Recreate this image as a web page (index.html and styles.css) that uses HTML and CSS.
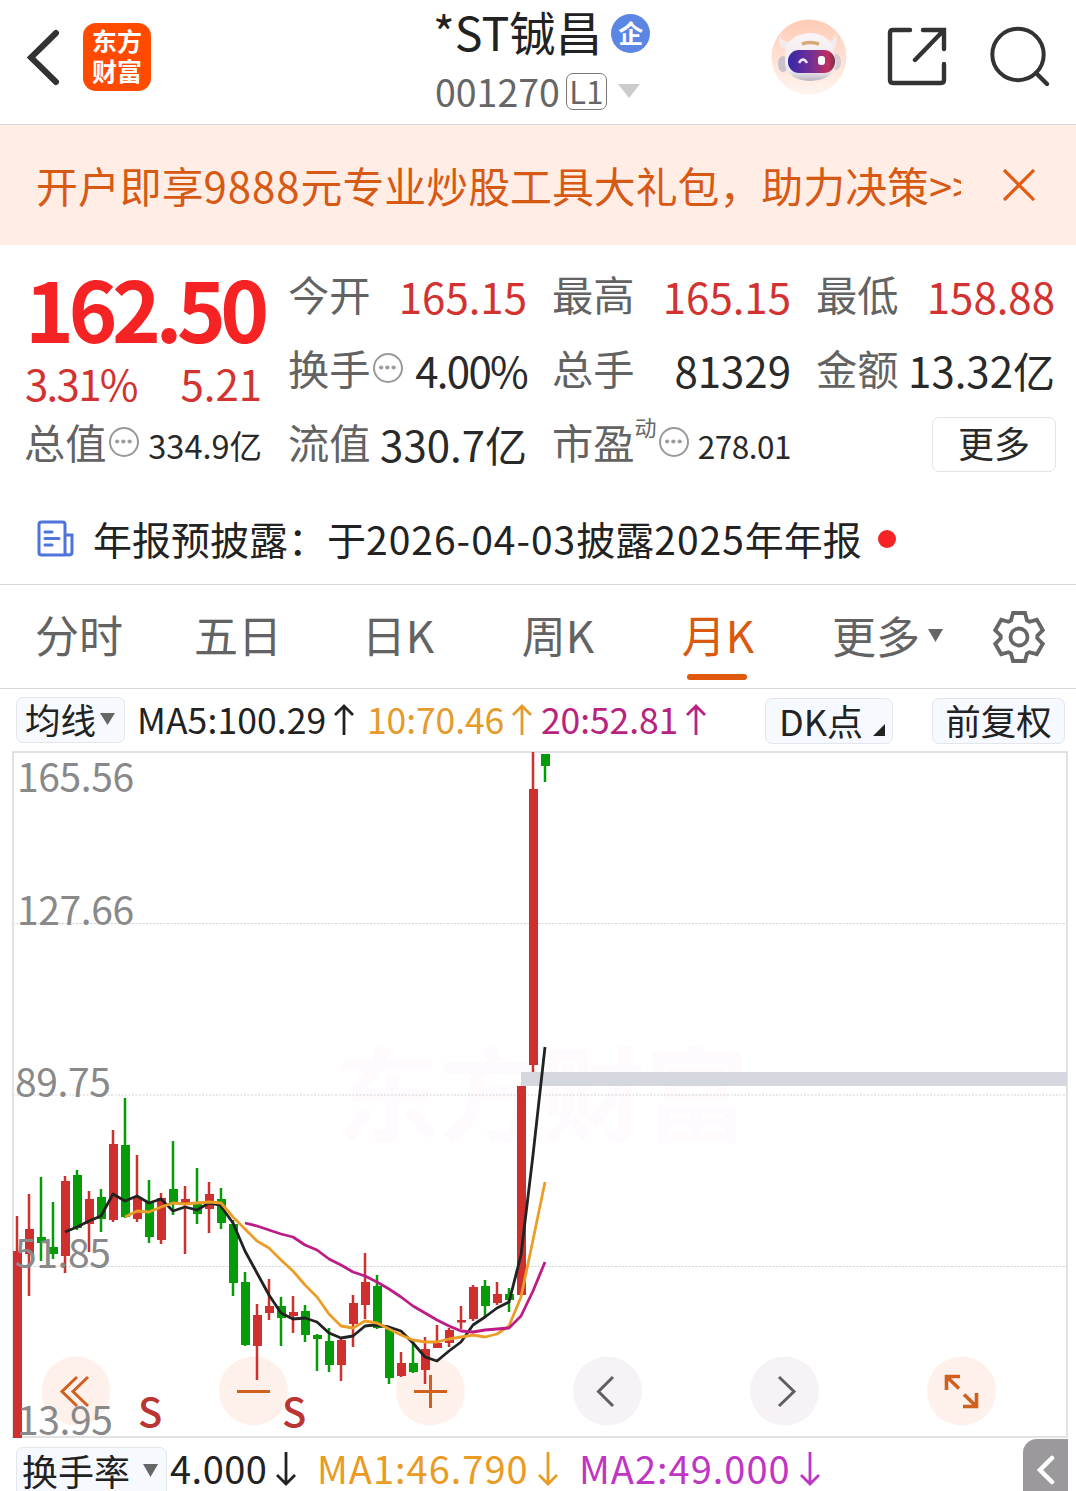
FILE: index.html
```html
<!DOCTYPE html>
<html lang="zh-CN">
<head>
<meta charset="utf-8">
<title>*ST铖昌 001270</title>
<link rel="stylesheet" href="styles.css">
</head>
<body>
<header class="header">
  <div class="header-left">
    <svg class="back" width="36" height="58" viewBox="0 0 36 58"><path d="M30 5L5 29.500L30 54" fill="none" stroke="#333" stroke-width="6" stroke-linecap="round"/></svg>
    <div class="logo"><span>东方</span><span>财富</span></div>
  </div>
  <div class="header-title">
    <div class="name"><span>*ST铖昌</span><i class="badge">企</i></div>
    <div class="code"><span>001270</span><b class="level">L1</b><svg width="22" height="14" viewBox="0 0 22 14"><path d="M0 0H22L11 14Z" fill="#ccc"/></svg></div>
  </div>
  <div class="header-right">
    <svg width="76" height="76" viewBox="0 0 76 76">
      <defs>
        <linearGradient id="halo" x2="0" y2="1"><stop offset="0" stop-color="#ffcbb5"/><stop offset="1" stop-color="#fff5f0"/></linearGradient>
        <linearGradient id="visor"><stop offset="0" stop-color="#3527a8"/><stop offset=".5" stop-color="#743096"/><stop offset=".85" stop-color="#c12f60"/><stop offset="1" stop-color="#7a3048"/></linearGradient>
        <linearGradient id="shell" x2="0" y2="1"><stop offset="0" stop-color="#faf5f6"/><stop offset=".8" stop-color="#eee8ee"/><stop offset="1" stop-color="#b8b3bf"/></linearGradient>
      </defs>
      <circle cx="38" cy="38" r="37.500" fill="url(#halo)"/>
      <path d="M17 31Q5 28 9 17Q13 25 22 22M56 22Q64 23 64 14Q69 25 61 31" fill="#f3ebee"/>
      <ellipse cx="12" cy="45" rx="5" ry="8" fill="#c9c2ca"/><ellipse cx="65" cy="43" rx="5" ry="8" fill="#d5ccd3"/>
      <path d="M14 34Q17 15 39 14Q60 15 63 34L65 46Q61 61 39 62Q18 61 14 46Z" fill="url(#shell)"/>
      <path d="M31 25Q39 22 48 25" fill="none" stroke="#d9a879" stroke-width="3.500"/>
      <rect x="17" y="31" width="47" height="23" rx="11" fill="url(#visor)"/>
      <path d="M28 44Q32 37 36 44" fill="none" stroke="#f0e8ff" stroke-width="2.500"/><rect x="47" y="37" width="7" height="9" rx="3" fill="#fff"/>
    </svg>
    <svg class="share" width="60" height="60" viewBox="0 0 60 60"><path d="M23 3H6Q3 3 3 6V53Q3 56 6 56H54Q57 56 57 53V37M36 3H57V22M57 3L28 33" fill="none" stroke="#333" stroke-width="4.400" stroke-linecap="round"/></svg>
    <svg class="search" width="62" height="62" viewBox="0 0 62 62"><circle cx="29" cy="28.500" r="25.700" fill="none" stroke="#333" stroke-width="4"/><path d="M47 47L58 58" stroke="#333" stroke-width="4.400" stroke-linecap="round"/></svg>
  </div>
</header>

<section class="banner">
  <p>开户即享<span class="num">9888</span>元专业炒股工具大礼包，助力决策&gt;&gt;</p>
  <svg width="32" height="32" viewBox="0 0 32 32"><path d="M1 1L31 31M31 1L1 31" stroke="#e35a10" stroke-width="3.200"/></svg>
</section>

<section class="quote">
  <div class="price-col">
    <div class="price">162.50</div>
    <div class="change"><span class="pct">3.31%</span><span>5.21</span></div>
    <div class="cell small"><label>总值</label><i class="info"></i><span>334.9亿</span></div>
  </div>
  <div class="stats">
    <div class="cell up"><label>今开</label><span>165.15</span></div>
    <div class="cell up"><label>最高</label><span>165.15</span></div>
    <div class="cell up"><label>最低</label><span>158.88</span></div>
    <div class="cell"><label>换手</label><i class="info"></i><span class="pct">4.00%</span></div>
    <div class="cell"><label>总手</label><span>81329</span></div>
    <div class="cell"><label>金额</label><span>13.32亿</span></div>
    <div class="cell"><label>流值</label><span>330.7亿</span></div>
    <div class="cell small pe"><label>市盈</label><sup>动</sup><i class="info"></i><span>278.01</span></div>
    <div class="cell"><button class="more">更多</button></div>
  </div>
</section>

<section class="notice">
  <svg width="38" height="38" viewBox="0 0 38 38" fill="none" stroke="#4f74d9" stroke-width="3"><path d="M28 35H4.500Q2 35 2 32.500V4.500Q2 2 4.500 2H25.500Q28 2 28 4.500V32.500Q28 35 31.500 35Q35 35 35 32.500V15H28M8 12H15M8 18.500H22M8 25H15" stroke-linecap="round"/></svg>
  <p>年报预披露：于<span class="num">2026-04-03</span>披露<span class="num">2025</span>年年报</p>
  <i class="dot"></i>
</section>

<nav class="tabs">
  <a>分时</a><a>五日</a><a>日K</a><a>周K</a><a class="active">月K</a>
  <a class="tab-more">更多<svg width="15" height="13" viewBox="0 0 15 13"><path d="M0 0H15L7.500 13Z" fill="#666"/></svg></a>
  <svg class="gear" width="54" height="54" viewBox="-27 -27 54 54" fill="none" stroke="#666" stroke-width="3.800"><path d="M-6 -24H6L8 -16.500L10.300 -15.200L17.800 -17.200L23.800 -6.800L18.300 -1.300V1.300L23.800 6.800L17.800 17.200L10.300 15.200L8 16.500L6 24H-6L-8 16.500L-10.300 15.200L-17.800 17.200L-23.800 6.800L-18.300 1.300V-1.300L-23.800 -6.800L-17.800 -17.200L-10.300 -15.200L-8 -16.500Z"/><circle r="8.500"/></svg>
</nav>

<section class="ma-row">
  <button class="chip chip-ma">均线<svg width="15" height="12" viewBox="0 0 15 12"><path d="M0 0H15L7.500 12Z" fill="#666"/></svg></button>
  <span class="ma ma5">MA5:100.29<svg class="arrow" viewBox="0 0 20 32"><path d="M10 31V2M1 11L10 2L19 11"/></svg></span>
  <span class="ma ma10">10:70.46<svg class="arrow" viewBox="0 0 20 32"><path d="M10 31V2M1 11L10 2L19 11"/></svg></span>
  <span class="ma ma20">20:52.81<svg class="arrow" viewBox="0 0 20 32"><path d="M10 31V2M1 11L10 2L19 11"/></svg></span>
  <button class="chip chip-dk">DK点<svg width="12" height="12" viewBox="0 0 12 12"><path d="M12 0V12H0Z" fill="#222"/></svg></button>
  <button class="chip chip-adj">前复权</button>
</section>

<svg class="chart" width="1076" height="688" viewBox="0 751 1076 688">
  <text class="watermark" x="336" y="1134" textLength="412">东方财富</text>
  <path d="M13 923.500H1067M13 1095H1067M13 1266.500H1067" stroke="#d2d2d2" stroke-dasharray="2 1.500"/>
  <path d="M13 752H1067V1437H13Z" fill="none" stroke="#e2e2e4" stroke-width="2"/>
  <rect x="521" y="1072" width="546" height="14" fill="#d5d7df"/>
  <g class="buttons">
    <g fill="#fef1ec"><circle cx="76" cy="1391" r="34.500"/><circle cx="253.500" cy="1391" r="34.500"/><circle cx="430.500" cy="1391" r="34.500"/><circle cx="961.500" cy="1391" r="34.500"/></g>
    <g fill="#f6f2f6"><circle cx="607.500" cy="1391" r="34.500"/><circle cx="784.500" cy="1391" r="34.500"/></g>
  </g>
  <g class="red">
    <path class="wick" d="M17 1216V1437M29 1194V1296M65 1176V1273M89 1191V1252M113 1130V1222M137 1155V1222M161 1193V1244M185 1186V1254M209 1182V1233M257 1304V1380M269 1279V1320M293 1296V1333M341 1339V1381M353 1295V1347M365 1253V1319M401 1352V1377M425 1337V1384M437 1325V1348M449 1328V1347M461 1306V1329M473 1285V1321M497 1282V1305M533 752V1072"/>
    <path class="body" d="M17.500 1251V1438M29.500 1229V1254M65.500 1181V1256M89.500 1199V1224M113.500 1144V1220M137.500 1198V1219M161.500 1198V1240M185.500 1199V1203M209.500 1194V1209M257.500 1315V1346M269.500 1306V1313M293.500 1312V1316M341.500 1340V1365M353.500 1303V1324M365.500 1282V1305M401.500 1363V1376M425.500 1349V1370M437.500 1343V1348M449.500 1330V1343M461.500 1320V1322.500M473.500 1287V1319M497.500 1294V1303M521.500 1086V1295M533.500 789V1065"/>
  </g>
  <g class="green">
    <path class="wick" d="M41 1177V1261M53 1202V1259M77 1170V1230M101 1189V1232M125 1098V1218M149 1180V1243M173 1141V1215M197 1168V1224M221 1188V1229M233 1220V1296M245 1272V1346M281 1297V1346M305 1305V1342M317 1334V1371M329 1328V1372M377 1275V1329M389 1327V1384M413 1339V1373M485 1280V1316M509 1288V1312M545 754V782"/>
    <path class="body" d="M41.500 1237V1243M53.500 1247V1254M77.500 1175V1228M101.500 1197V1219M125.500 1145V1217M149.500 1202V1237M173.500 1189V1204M197.500 1203V1214M221.500 1199V1223M233.500 1224V1283M245.500 1282V1345M281.500 1306V1318M305.500 1311V1335M317.500 1335V1339M329.500 1341V1365M377.500 1286V1328M389.500 1329V1378M413.500 1363V1372M485.500 1286V1306M509.500 1294V1300M545.500 754V766"/>
  </g>
  <polyline class="line" stroke="#222" points="65,1232 77,1227 89,1221 101,1216 113,1194 125,1201 137,1196 149,1203 161,1199 173,1211 185,1207 197,1210 209,1203 220,1205 233,1223 245,1251 257,1273 269,1295 281,1313 293,1319 305,1318 317,1322 329,1333 341,1338 353,1336 365,1326 374,1325 389,1327 401,1331 413,1343 425,1357 437,1361 449,1351 461,1342 473,1325 485,1317 497,1308 509,1302 521,1255 533,1155 545,1047"/>
  <polyline class="line" stroke="#eb9d27" points="125,1217 137,1211 149,1212 161,1207 173,1203 185,1204 209,1202 221,1203 233,1217 257,1241 269,1248 281,1260 293,1271 305,1285 317,1297 329,1314 341,1326 353,1328 365,1321 377,1323 389,1329 401,1335 413,1340 425,1342 437,1342 449,1339 461,1337 473,1335 485,1337 497,1334 509,1326 521,1297 533,1240 545,1182"/>
  <polyline class="line" stroke="#bd1c86" points="245,1223 257,1226 269,1230 281,1234 293,1237 305,1245 317,1250 329,1259 341,1265 353,1272 365,1276 377,1282 389,1289 401,1297 413,1306 425,1313 437,1320 449,1326 461,1331 473,1332 485,1330 509,1328 521,1316 533,1291 545,1262"/>
  <g fill="none" stroke="#cf601e" stroke-width="3">
    <path d="M77 1377L62 1391.500L77 1406M88 1377L73 1391.500L88 1406"/>
    <path d="M237 1391.500H270M414 1391.500H447M430.500 1375V1408"/>
    <path stroke-width="3.600" d="M946.500 1390V1376.500H960M946.500 1376.500L959 1388.500M976.500 1393V1406.500H963M976.500 1406.500L964 1394.500"/>
  </g>
  <path d="M613 1377L598.500 1391.500L613 1406M779 1377L794 1391.500L779 1406" fill="none" stroke="#5e605f" stroke-width="3"/>
  <g class="axis"><text x="17" y="792">165.56</text><text x="17" y="925">127.66</text><text x="15" y="1097">89.75</text><text x="15" y="1268">51.85</text><text x="17" y="1435">13.95</text></g>
  <g class="sell"><text x="138" y="1427">S</text><text x="282" y="1427">S</text></g>
</svg>

<footer class="footer">
  <button class="chip chip-turn"><span>换手率</span><svg width="15" height="13" viewBox="0 0 15 13"><path d="M0 0H15L7.500 13Z" fill="#666"/></svg></button>
  <span class="rate r0">4.000<svg class="arrow" viewBox="0 0 20 34"><path d="M10 0V32M1 23L10 32L19 23"/></svg></span>
  <span class="rate r1">MA1:46.790<svg class="arrow" viewBox="0 0 20 34"><path d="M10 0V32M1 23L10 32L19 23"/></svg></span>
  <span class="rate r2">MA2:49.000<svg class="arrow" viewBox="0 0 20 34"><path d="M10 0V32M1 23L10 32L19 23"/></svg></span>
  <div class="drawer"><svg width="18" height="30" viewBox="0 0 18 30"><path d="M15 3L3 15L15 27" fill="none" stroke="#fff" stroke-width="4.500" stroke-linecap="round"/></svg></div>
</footer>
</body>
</html>
```
FILE: styles.css
```css
* { box-sizing: border-box; margin: 0; padding: 0; }
body {
  width: 1076px; height: 1491px; overflow: hidden; background: #fff; color: #222;
  font-family: "Noto Sans CJK SC", sans-serif; font-size: 41.5px; line-height: 56px; white-space: nowrap;
}
i, b { font-style: normal; font-weight: 400; }
svg { flex: none; display: block; }
button { font: inherit; color: inherit; background: none; border: 0; }

.header { height: 125px; border-bottom: 1px solid #d5d5d8; display: flex; }
.header-left { flex: none; width: 425px; padding: 23px 0 0 26px; display: flex; gap: 21px; }
.back { margin-top: 5px; }
.logo {
  width: 68px; height: 68px; border-radius: 13px; background: #ff4a00; color: #fff; padding-top: 2px;
  display: flex; flex-direction: column; align-items: center; font-size: 25px; font-weight: 700; line-height: 30px;
}
.header-title { flex: none; width: 346px; }
.name { height: 66px; padding-left: 8px; display: flex; align-items: center; gap: 9px; font-size: 46.500px; }
.name > span { margin-top: -5px; }
.badge {
  flex: none; width: 39px; height: 39px; border-radius: 50%; background: #5b86e3; color: #fff; text-align: center;
  font-size: 25px; font-weight: 700; line-height: 36px;
}
.code { margin-top: 5px; padding-left: 10px; height: 40px; display: flex; align-items: center; font-size: 37.500px; color: #666; }
.level { width: 41px; height: 37px; margin: 0 11px 0 6px; border: 1.500px solid #777; border-radius: 7px; text-align: center; font-size: 31px; line-height: 33px; }
.header-right { padding-top: 19px; display: flex; }
.share { margin: 8px 0 0 40px; }
.search { margin: 7px 0 0 42px; }

.banner { height: 120px; background: #ffede6; color: #d65a14; padding: 0 41px 0 36px; display: flex; align-items: center; justify-content: space-between; }
.banner p { width: 925px; overflow: hidden; font-size: 41.900px; margin-top: -1px; }
.banner .num { letter-spacing: 1px; }

.quote { height: 249px; padding: 25px 20px 0 25px; display: flex; gap: 27px; }
.price-col { width: 237px; }
.price { height: 84px; line-height: 74px; color: #f52323; font-size: 83px; font-weight: 700; letter-spacing: -5.500px; }
.change { height: 64px; line-height: 58px; display: flex; justify-content: space-between; color: #d23331; font-size: 42px; }
.stats { display: grid; grid-template-columns: repeat(3, 238px); grid-auto-rows: 74px; column-gap: 26px; }
.cell { display: flex; height: 54px; line-height: 52px; font-size: 42px; color: #292929; }
.cell label { color: #636363; font-size: 41.300px; margin: -3px 0 0 -1px; }
.cell > span { margin-left: auto; }
.cell.up > span { color: #d23331; }
.cell.small > span { font-size: 32.500px; margin-top: 1px; }
.cell.pe > span { font-size: 31.500px; letter-spacing: -.5px; }
.pct { letter-spacing: -1.700px; }
.cell sup { width: 22px; font-size: 22px; line-height: 16px; color: #666; }
.info { width: 30px; height: 30px; margin: 9px 0 0 2px; border: 2.500px solid #999; border-radius: 50%; background: radial-gradient(circle, #999 0 1.700px, transparent 2.300px) 0 0 / 6.250px 25px content-box; padding: 0 3px; background-repeat: repeat-x; }
.more { width: 124px; height: 55px; margin: -1px -1px 0 auto; border: 1.500px solid #e4e4e6; border-radius: 7px; font-size: 36px; line-height: 44px; padding-bottom: 5px; }

.notice { height: 91px; border-bottom: 1px solid #d8d8da; padding: 0 37px; display: flex; align-items: center; }
.notice p { margin: -3px 0 0 18px; font-size: 39px; }
.notice .num { letter-spacing: 1px; }
.dot { width: 18px; height: 18px; margin-left: 16px; border-radius: 50%; background: #f52323; }

.tabs { height: 104px; border-bottom: 1px solid #d8d8da; display: flex; align-items: center; color: #636363; font-size: 44px; }
.tabs a { width: 160px; height: 104px; line-height: 99px; text-align: center; }
.tabs a:first-child { width: 158px; }
.tabs .active { position: relative; color: #d9590f; }
.active::after { content: ""; position: absolute; left: 49px; top: 89px; width: 60px; height: 6px; border-radius: 3px; background: #df580b; }
.tabs .tab-more { width: 194px; padding: 0 0 3px 34px; display: flex; align-items: center; gap: 8px; }
.tab-more svg { margin-top: 1px; }

.ma-row { height: 62px; padding: 8px 11px 0 16px; display: flex; font-size: 35.500px; line-height: 44px; }
.chip { display: flex; flex: none; height: 46px; border: 1.500px solid #e4e6ec; border-radius: 7px; background: #f6f9ff; align-items: center; color: #222; }
.chip-ma, .chip-dk, .chip-adj { line-height: 40px; padding-bottom: 3px; }
.chip-ma { width: 109px; padding-left: 8px; gap: 4px; }
.ma { display: flex; }
.arrow { width: 20px; fill: none; stroke: currentColor; stroke-width: 2.800; }
.ma .arrow { height: 32px; margin: 7px 0 0 8px; }
.ma5 { width: 230px; margin-left: 12px; letter-spacing: .1px; }
.ma10 { width: 174px; color: #e59b2b; letter-spacing: -.1px; }
.ma20 { width: 224px; color: #b7237f; letter-spacing: -.1px; }
.chip-dk { width: 128px; padding-left: 13px; margin-top: 1px; font-size: 36px; }
.chip-dk svg { margin: 20px 0 0 10px; }
.chip-adj { width: 133px; margin: 1px 0 0 auto; justify-content: center; }

.chart { font-size: 39px; }
.watermark { font-size: 103px; font-weight: 700; fill: #fefafd; }
.wick { fill: none; stroke-width: 2.500; }
.body { fill: none; stroke-width: 9; }
.red { stroke: #cf302d; }
.green { stroke: #069c09; }
.line { fill: none; stroke-width: 2.800; stroke-linejoin: round; }
.axis { fill: #898989; letter-spacing: -.4px; }
.sell { fill: #b93532; font-size: 40px; font-weight: 500; }

.footer { height: 52px; padding: 8px 8px 0 16px; display: flex; font-size: 38px; line-height: 42px; }
.footer .chip { width: 151px; height: 50px; padding-left: 5px; gap: 13px; font-size: 36px; }
.chip-turn span { margin-top: -5px; }
.chip-turn svg { margin-top: -4px; }
.rate { display: flex; }
.rate .arrow { width: 22px; height: 34px; margin: 5px 0 0 8px; }
.r0 { width: 147px; margin-left: 3px; letter-spacing: .5px; }
.r1 { width: 262px; color: #e99b24; letter-spacing: 1px; }
.r2 { color: #bf35c5; letter-spacing: 1px; }
.drawer { width: 45px; height: 60px; margin: -8px 0 0 auto; border-radius: 14px 0 0 0; background: #9b999b; padding: 16px 0 0 14px; }
```
